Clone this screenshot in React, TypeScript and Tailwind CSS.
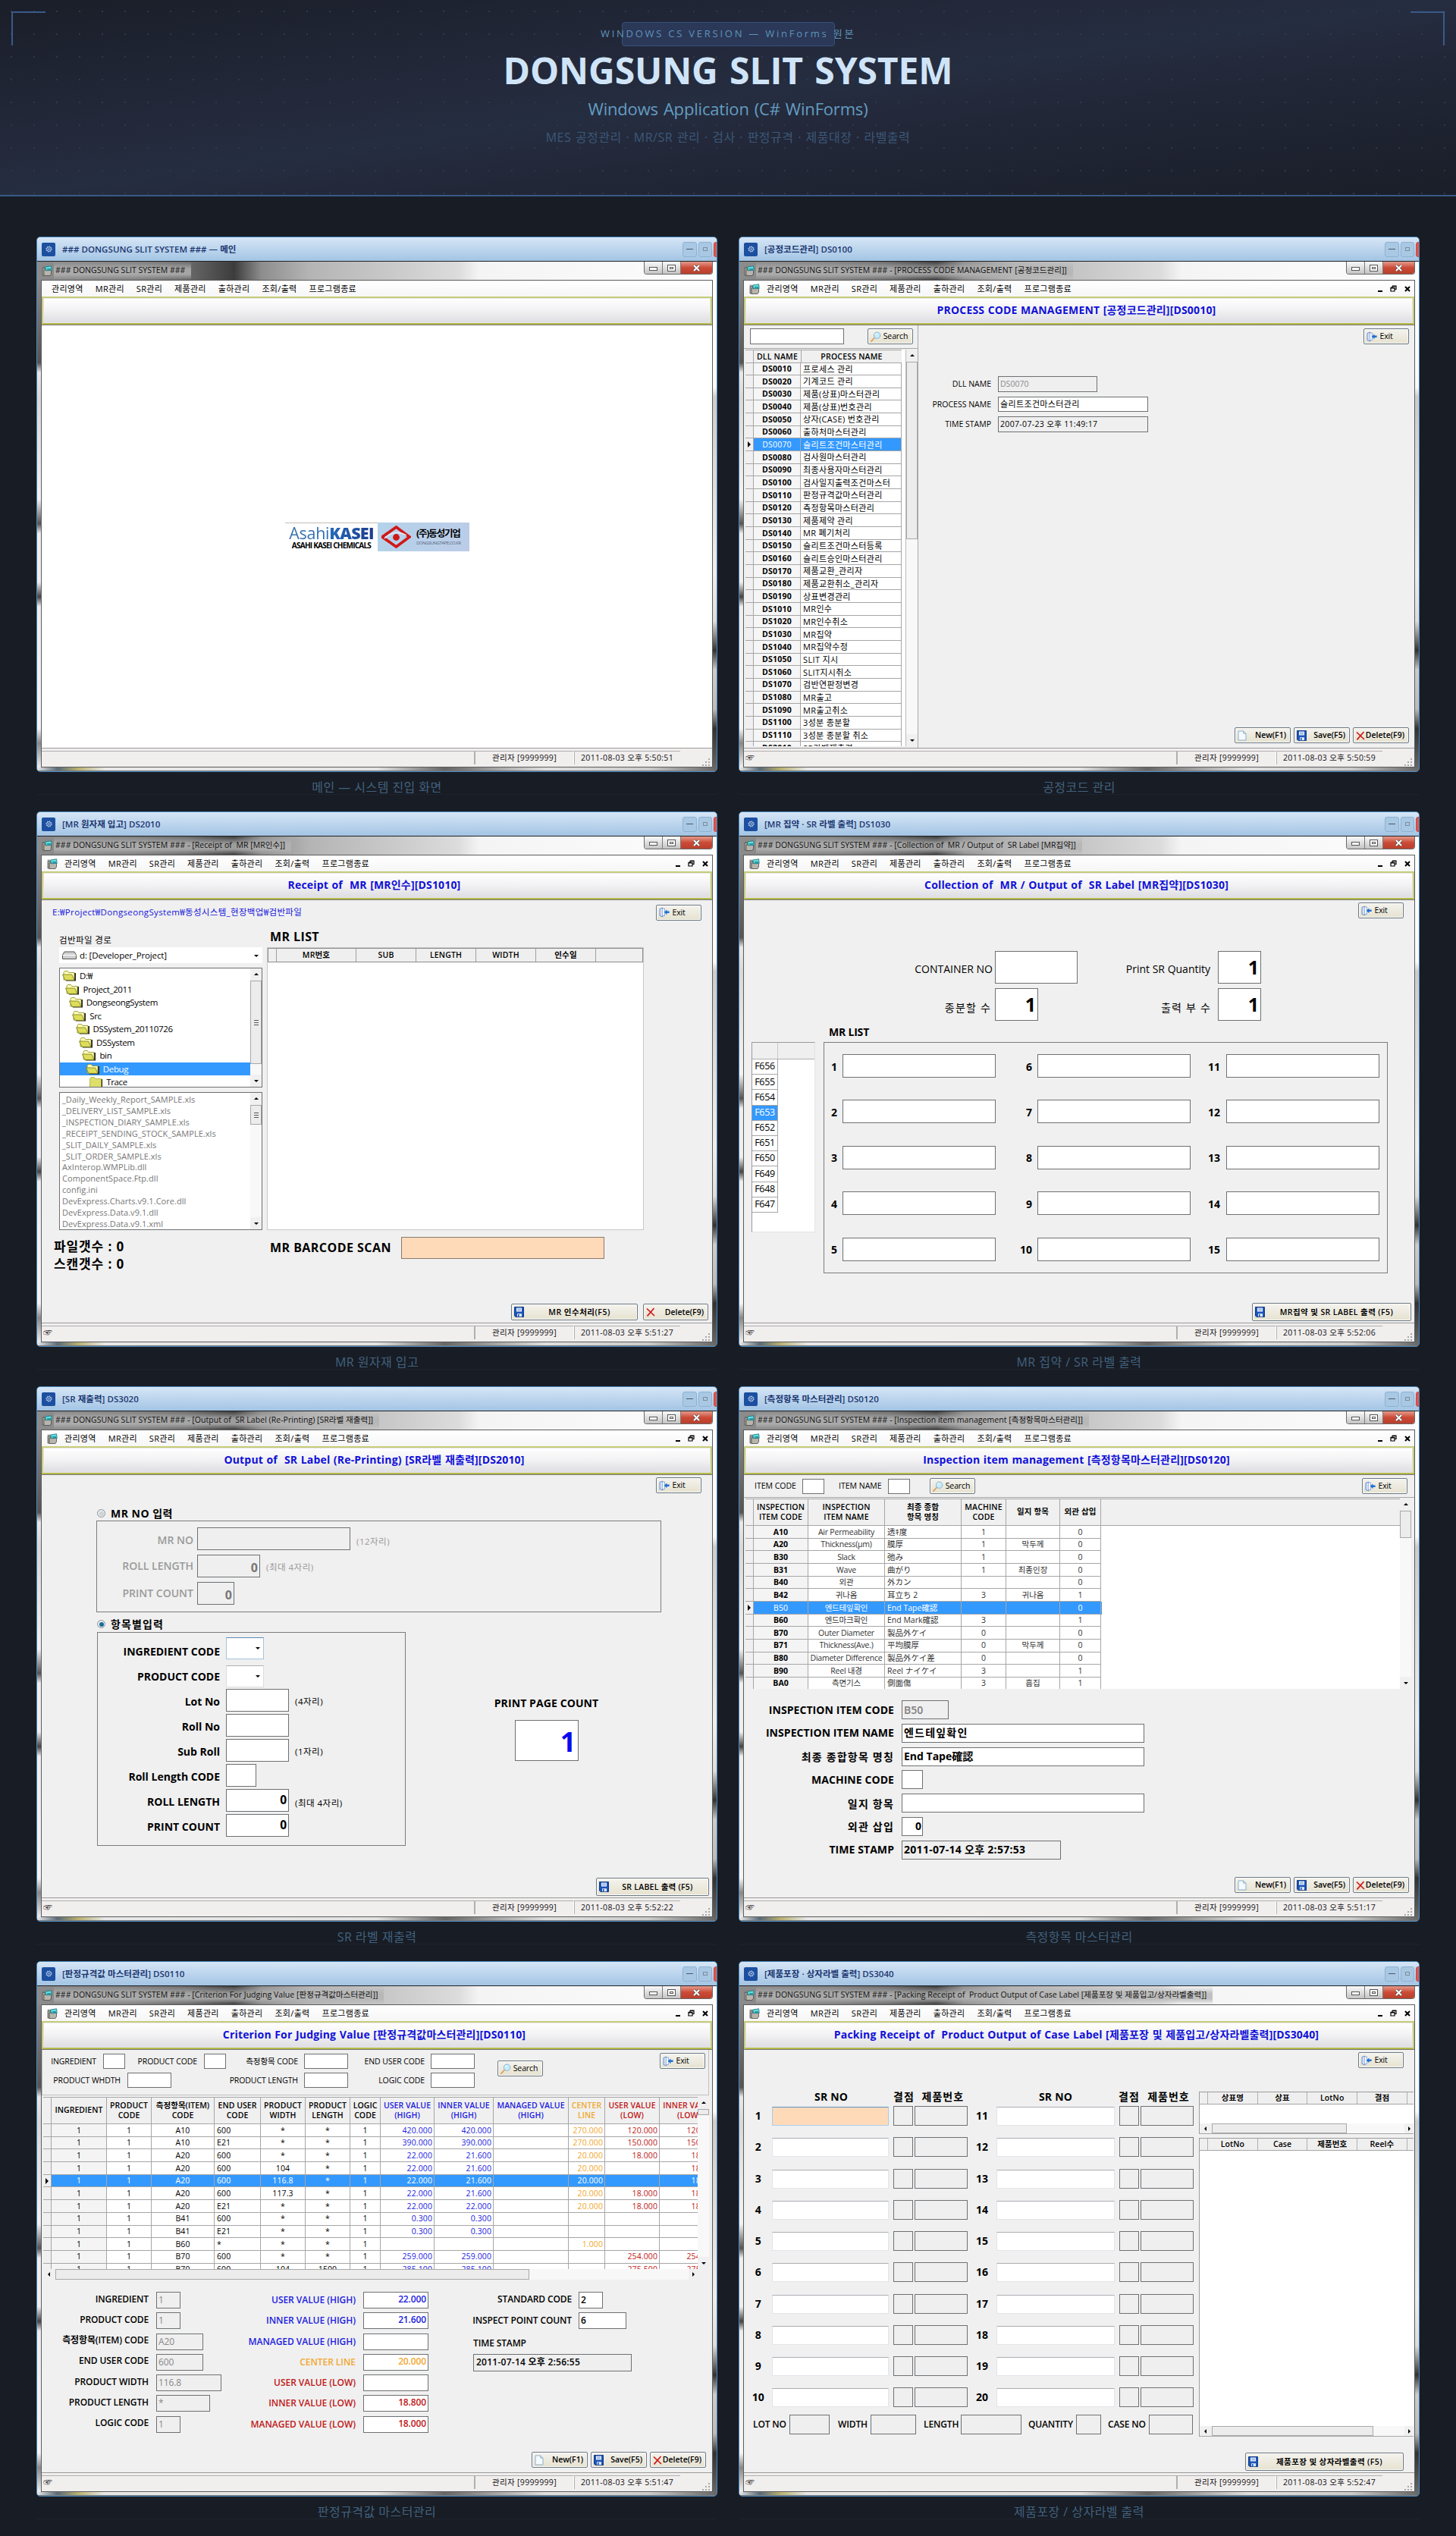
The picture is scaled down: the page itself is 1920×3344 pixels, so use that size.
import React from 'react';
import clsx from 'clsx';

type Kids = { children?: React.ReactNode; className?: string };

const SUNKEN = 'border border-[#6e7073] bg-white';

/* ---------- icons ---------- */

const AppIcon = ({ className }: { className?: string }) => (
  <svg viewBox="0 0 14 14" className={clsx('h-[14px] w-[14px] shrink-0', className)}>
    <path d="M1 3.5h4V13H1z" fill="#a4a29c" stroke="#555" strokeWidth=".8" />
    <path d="M3 6h9.5v5L11 13.5H3z" fill="#b9b5ac" stroke="#4a4a4a" strokeWidth=".8" />
    <path d="M4.5 2 12.6.8l.6 5.6-7.6.4z" fill="#5fe0dc" stroke="#1c6c78" strokeWidth=".8" />
    <path d="M7 4h5l.4 2.2-5 .2z" fill="#2a9aa6" />
    <path d="M.6 2.2h3.2" stroke="#777" />
  </svg>
);

const SearchIcon = () => (
  <svg viewBox="0 0 14 14" className="h-[14px] w-[14px] shrink-0">
    <path d="M1 13 5 8.6" stroke="#e0a868" strokeWidth="2" strokeLinecap="round" />
    <circle cx="8.6" cy="5.2" r="4.2" fill="#c9ecfb" stroke="#7fb4d8" />
    <path d="M6.4 4.4a2.6 2.6 0 0 1 2.4-1.8" stroke="#fff" fill="none" />
  </svg>
);

const ExitIcon = () => (
  <svg viewBox="0 0 14 14" className="h-[14px] w-[14px] shrink-0">
    <path d="M1 2.4 4.8 1v12L1 11.4z" fill="#cfe0f8" stroke="#5b86cc" strokeWidth=".9" />
    <path d="M4.8 2h2.6v9.6H4.8" fill="#fff" stroke="#7d9fd6" strokeWidth=".9" />
    <path d="M6.8 6.8 10.4 3.4v2.1H13.6v2.6h-3.2v2.1z" fill="#1d6fd0" />
  </svg>
);

const DiskIcon = () => (
  <svg viewBox="0 0 13 14" className="h-[14px] w-[13px] shrink-0">
    <path d="M.5.5h12v13H2L.5 12z" fill="#1c55b8" stroke="#123a86" />
    <path d="M3 1.5h7v5H3z" fill="#f2f7ff" />
    <path d="M4 3h5M4 4.8h5" stroke="#5b86cc" strokeWidth=".8" />
    <path d="M4 9.2h6v4H4z" fill="#dfe9f8" />
    <path d="M5 10h1.6v3.2H5z" fill="#1c55b8" />
  </svg>
);

const PageIcon = () => (
  <svg viewBox="0 0 12 14" className="h-[14px] w-[12px] shrink-0">
    <path d="M1 1h6.8L11 4.2V13H1z" fill="#f4faff" stroke="#8ab0cc" />
    <path d="M7.8 1v3.2H11" fill="#cfe4f2" stroke="#8ab0cc" />
  </svg>
);

const CrossIcon = () => (
  <svg viewBox="0 0 12 12" className="h-[12px] w-[12px] shrink-0">
    <path d="M1 1.5 11 11M10.5 1 1.5 11.4" stroke="#d01818" strokeWidth="1.7" />
  </svg>
);

const FolderIcon = ({ open = true }: { open?: boolean }) => (
  <svg viewBox="0 0 19 15" className="h-[15px] w-[19px] shrink-0">
    {open ? (
      <>
        <path d="M4 4h14v10.5H5z" fill="#222" />
        <path d="M2 3.5 3.2 1.5h4.2l1.4 2H16v9.5H2z" fill="#ffffb8" stroke="#8a8a20" strokeWidth=".8" />
        <path d="M.5 6h12.2l3.2 7.4H4z" fill="#dede5a" stroke="#77771c" strokeWidth=".8" />
      </>
    ) : (
      <>
        <path d="M3 4h15v11H3z" fill="#222" />
        <path d="M1.5 3.5 3 1.5h4.4l1.4 2H16.5V15h-15z" fill="#dede6a" stroke="#a8a840" strokeWidth=".8" />
      </>
    )}
  </svg>
);

const Arrow = ({ dir }: { dir: 'up' | 'down' | 'left' | 'right' }) => {
  const d = { up: 'M1 5h6L4 2z', down: 'M1 3h6L4 6z', left: 'M5 1v6L2 4z', right: 'M3 1v6l3-3z' }[dir];
  return (
    <svg viewBox="0 0 8 8" className="h-2 w-2 shrink-0">
      <path d={d} fill="#000" />
    </svg>
  );
};

/* ---------- small controls ---------- */

const Btn = ({ children, className, icon }: Kids & { icon: React.ReactNode }) => (
  <div
    className={clsx(
      'flex shrink-0 items-center rounded-[2px] border border-[#6d7a86] bg-linear-to-b from-[#f4f3ee] to-[#e6e2d0] px-[3px] shadow-[inset_0_0_0_1px_#faf9f4]',
      className,
    )}
  >
    {icon}
    <span className="flex-1 text-center whitespace-nowrap">{children}</span>
  </div>
);

const ExitBtn = ({ className }: { className?: string }) => (
  <Btn icon={<ExitIcon />} className={clsx('h-[21px] w-[60px] pr-[17px] tracking-[-0.2px]', className)}>
    Exit
  </Btn>
);

const SearchBtn = ({ className }: { className?: string }) => (
  <Btn icon={<SearchIcon />} className={clsx('h-[21px] w-[60px] tracking-[-0.1px]', className)}>
    Search
  </Btn>
);

const Field = ({ children, className, ro }: Kids & { ro?: boolean }) => (
  <div
    className={clsx(
      'flex shrink-0 items-center overflow-hidden border border-[#6e7073] px-[2px] whitespace-nowrap',
      ro ? 'bg-[#efefef]' : 'bg-white',
      className,
    )}
  >
    {children}
  </div>
);

const Label = ({ children, className }: Kids) => (
  <div className={clsx('shrink-0 text-right whitespace-nowrap', className)}>{children}</div>
);

const Grip = ({ show }: { show?: boolean }) =>
  show ? <span className="h-[7px] w-[6px] border-y border-[#555] bg-[linear-gradient(to_bottom,transparent_2px,#555_2px,#555_3px,transparent_3px)]" /> : null;

const VScroll = ({ className, thumb, grip }: { className?: string; thumb: string; grip?: boolean }) => (
  <div className={clsx('flex shrink-0 flex-col items-center bg-[#f8f8f8]', className)}>
    <div className="flex h-4 w-full shrink-0 items-center justify-center bg-[#f0f0f0]">
      <Arrow dir="up" />
    </div>
    <div className={clsx('flex w-full shrink-0 items-center justify-center border border-[#a8a8a8] bg-[#ececec]', thumb)}>
      <Grip show={grip} />
    </div>
    <div className="flex-1" />
    <div className="flex h-4 w-full shrink-0 items-center justify-center bg-[#f0f0f0]">
      <Arrow dir="down" />
    </div>
  </div>
);

const HScroll = ({ className, thumb }: { className?: string; thumb: string }) => (
  <div className={clsx('flex shrink-0 items-center bg-[#f8f8f8]', className)}>
    <div className="flex h-full w-4 shrink-0 items-center justify-center bg-[#f0f0f0]">
      <Arrow dir="left" />
    </div>
    <div className={clsx('h-full shrink-0 border border-[#a8a8a8] bg-[#ececec]', thumb)} />
    <div className="flex-1" />
    <div className="flex h-full w-3 shrink-0 items-center justify-center bg-[#f0f0f0]">
      <Arrow dir="right" />
    </div>
  </div>
);

const EditButtons = ({ className }: { className?: string }) => (
  <div className={clsx('flex gap-[4px]', className)}>
    <Btn icon={<PageIcon />} className="h-[21px] w-[74px] pr-[5px] font-semibold [&>span]:text-right">
      New(F1)
    </Btn>
    <Btn icon={<DiskIcon />} className="h-[21px] w-[74px] pr-[5px] font-semibold [&>span]:text-right">
      Save(F5)
    </Btn>
    <Btn icon={<CrossIcon />} className="h-[21px] w-[74px] pr-[5px] font-semibold [&>span]:text-right">
      Delete(F9)
    </Btn>
  </div>
);

/* ---------- window chrome ---------- */

const MENU = ['관리영역', 'MR관리', 'SR관리', '제품관리', '출하관리', '조회/출력', '프로그램종료'];

type WindowProps = {
  bar: string;
  caption?: string;
  heading?: string;
  time: string;
  note: string;
  body?: string;
  children?: React.ReactNode;
};

const Window = ({ bar, caption, heading, time, note, body = 'bg-[#f0f0f0]', children }: WindowProps) => (
  <div className="flex h-[758px] w-[898px] flex-col">
    <div className="flex h-[706px] flex-col overflow-hidden rounded-[5px] border border-[#4a8ac0] bg-[#777]">
      <div className="flex h-[31px] shrink-0 items-center overflow-hidden bg-linear-to-b from-[#d6e6f6] to-[#a3c4e4] pl-[6px]">
        <div className="flex h-[18px] w-[18px] shrink-0 items-center justify-center rounded-[2px] bg-[#1c4fa0]">
          <svg viewBox="0 0 10 10" className="h-[9px] w-[9px]">
            <circle cx="5" cy="5" r="3.2" fill="none" stroke="#dce8fa" strokeWidth="1.1" />
            <circle cx="5" cy="5" r="4.3" fill="none" stroke="#dce8fa" strokeWidth=".9" strokeDasharray="1.2 2.17" />
            <circle cx="5" cy="5" r="1" fill="#dce8fa" />
          </svg>
        </div>
        <span className="ml-[9px] w-[818px] shrink-0 text-[11.5px] font-semibold tracking-[0.05px] whitespace-pre text-[#1a3570]">
          {bar}
        </span>
        <div className="flex shrink-0 gap-[2px]">
          <div className="flex h-5 w-[19px] items-center justify-center rounded-[3px] border border-[#8fb2d2] bg-[#a9c8e4]">
            <span className="h-px w-[9px] bg-[#4a5a6a]" />
          </div>
          <div className="flex h-5 w-[18px] items-center justify-center rounded-[3px] border border-[#8fb2d2] bg-[#a9c8e4]">
            <span className="h-[5px] w-[6px] border border-[#7f8d9a]" />
          </div>
          <div className="h-5 w-5 rounded-[3px] border border-[#c84848] bg-[#d85850]" />
        </div>
      </div>

      <div className="flex h-[25px] shrink-0 items-start border-t border-[#222] bg-[linear-gradient(to_right,#8c8c8c_0%,#808080_14%,#6a6a6a_22%,#3c3c3c_29%,#8d8d8d_33%,#b4b4b4_40%,#c9c9c9_52%,#dcdcdc_62%,#f4f4f4_65%,#fdfdfd_100%)] pl-[6px]">
        <AppIcon className="mt-[5px]" />
        <div className="ml-[2px] flex h-[24px] items-center bg-[linear-gradient(to_bottom,transparent,#b4b4b4cc_40%,#b4b4b4cc_70%,transparent)] pr-2 pl-[2px]">
          <span className="text-[10.5px] tracking-[0.04px] whitespace-pre text-[#111]">
            {'### DONGSUNG SLIT SYSTEM ###' + (caption ? ' - [' + caption + ']' : '')}
          </span>
        </div>
        <div className="mr-[5px] ml-auto flex h-[17px] overflow-hidden rounded-b-[4px] border border-t-0 border-[#6a6a6a]">
          <div className="flex w-[24px] items-end justify-center border-r border-[#7a7a7a] bg-linear-to-b from-[#fafafa] to-[#c4c4c4] pb-[4px]">
            <span className="h-[5px] w-[11px] border border-[#555] bg-white" />
          </div>
          <div className="flex w-[24px] items-center justify-center border-r border-[#7a7a7a] bg-linear-to-b from-[#fafafa] to-[#c4c4c4]">
            <span className="flex h-[9px] w-[11px] items-center justify-center border border-[#555] bg-white">
              <span className="h-[3px] w-[5px] border border-[#555]" />
            </span>
          </div>
          <div className="flex w-[41px] items-center justify-center bg-linear-to-b from-[#e39a8c] via-[#cc4a36] to-[#b8402c]">
            <svg viewBox="0 0 10 9" className="h-[9px] w-[11px]">
              <path d="M1.5 1 8.5 8M8.5 1 1.5 8" stroke="#555" strokeWidth="3.4" />
              <path d="M1.5 1 8.5 8M8.5 1 1.5 8" stroke="#fff" strokeWidth="2" />
            </svg>
          </div>
        </div>
      </div>

      <div className="flex h-[643px] shrink-0">
        <div className="w-[5px] bg-[linear-gradient(to_bottom,#888_0%,#555_17%,#e8e8e8_19%,#d8d8d8_24%,#f2f2f2_45%,#555_50%,#eee_52%,#eee_62%,#444_65%,#eee_67%,#f4f4f4_92%,#888_95%,#eee_100%)]" />
        <div className="flex w-[886px] flex-col border border-[#5c5c5c] bg-[#f0f0f0] text-[10.5px] leading-none text-black">
          <div className={clsx('flex h-[21px] shrink-0 items-center bg-linear-to-b from-white to-[#f6f6f6]', heading ? 'pl-[7px]' : 'pl-[13px]')}>
            {heading && <AppIcon className="mr-[9px]" />}
            <div className="flex gap-[16px] text-[11px] tracking-[0.3px]">
              {MENU.map((m) => (
                <span key={m}>{m}</span>
              ))}
            </div>
            {heading && (
              <div className="mr-[5px] ml-auto flex items-center gap-[10px]">
                <span className="mt-[6px] h-[2px] w-[6px] bg-black" />
                <svg viewBox="0 0 9 9" className="h-[9px] w-[9px]">
                  <path d="M3 1h5v4.5H6M3 1v2M3 1.4h5" fill="none" stroke="#000" strokeWidth="1.2" />
                  <path d="M1 3.4h5V8H1zM1 4h5" fill="none" stroke="#000" strokeWidth="1.2" />
                </svg>
                <svg viewBox="0 0 8 8" className="h-[8px] w-[8px]">
                  <path d="M1 1 7 7M7 1 1 7" stroke="#000" strokeWidth="2" />
                </svg>
              </div>
            )}
          </div>
          <div className="h-[38px] shrink-0 border-b border-[#777]">
            <div className="flex h-[37px] items-center justify-center border-2 border-[#c6cc78] border-b-[#b4ba48] bg-linear-to-b from-white via-[#f2f2f4] to-[#dddde2] shadow-[inset_0_0_0_1px_#e6e6ea]">
              <span className="mr-[7px] pb-px text-[14px] font-bold tracking-[0.17px] [word-spacing:0.7px] whitespace-pre text-[#1010d8]">{heading}</span>
            </div>
          </div>
          <div className={clsx('flex h-[557px] shrink-0 flex-col overflow-hidden', body)}>{children}</div>
          <div className="flex h-[25px] shrink-0 items-center border-t border-[#9a9a9a] bg-[#f1eeee] text-[#111]">
            <div className="flex h-[18px] w-[571px] items-center border-t border-r border-[#b0b0b0] pl-[2px] text-[12px]">
              {heading && '☞'}
            </div>
            <div className="flex h-[18px] w-[131px] items-center justify-center border-t border-r border-l border-[#b0b0b0] border-r-white tracking-[0.33px]">
              관리자 [9999999]
            </div>
            <div className="flex h-[18px] w-[140px] items-center border-t border-l border-[#b0b0b0] pl-2 tracking-[0.33px]">
              2011-08-03 오후 {time}
            </div>
            <svg viewBox="0 0 10 10" className="mt-3 mr-[3px] ml-auto h-[10px] w-[10px]">
              <path d="M8 0h2v2H8zM8 4h2v2H8zM8 8h2v2H8zM4 4h2v2H4zM4 8h2v2H4zM0 8h2v2H0z" fill="#a8a8a8" />
            </svg>
          </div>
        </div>
        <div className="w-[5px] bg-[linear-gradient(to_bottom,#fff_0%,#fafafa_22%,#ccc_24%,#eee_60%,#ddd_70%,#333_76%,#ccc_80%,#bbb_88%,#333_92%,#666_100%)]" />
      </div>
      <div className="h-[4px] shrink-0 bg-[linear-gradient(to_right,#e8e8e8_0%,#5a6a78_3%,#b8b070_6%,#e8e8e8_10%,#e4e4e4_50%,#666_60%,#aaa_68%,#e0e0e0_75%,#ccc_90%,#666_100%)]" />
    </div>
    <div className="flex h-[30px] items-center justify-center border-b border-[#1d232e] pt-[13px] pb-[3px] text-[16px] tracking-[0.45px] text-[#41627f]">
      {note}
    </div>
  </div>
);

/* ---------- 메인 ---------- */

const MainScreen = () => (
  <Window bar="### DONGSUNG SLIT SYSTEM ### — 메인" time="5:50:51" note="메인 — 시스템 진입 화면" body="bg-white">
    <div className="mt-[260px] ml-[321px] flex h-[38px] w-[243px]">
      <div className="flex w-[122px] flex-col items-center border-t border-[#c4bcb4] pt-[1px]">
        <div className="bg-linear-to-r from-[#3a72a8] via-[#2468b8] to-[#1c3c8c] bg-clip-text text-[21.5px] leading-[23px] tracking-[-0.3px] whitespace-nowrap text-transparent">
          Asahi<b className="font-extrabold tracking-[-0.7px]">KASEI</b>
        </div>
        <div className="text-[10px] leading-[11px] font-bold tracking-[-0.76px] whitespace-nowrap">ASAHI KASEI CHEMICALS</div>
      </div>
      <div className="flex w-[121px] items-center bg-linear-to-r from-[#b4d2ea] to-[#bccce8] pl-[5px]">
        <svg viewBox="0 0 39 30" className="h-[30px] w-[39px]">
          <path d="M1 15 19.5 2 37 15 19.5 28z" fill="none" stroke="#d01818" strokeWidth="3.6" />
          <path d="M4 17q14-13 29-4" fill="none" stroke="#e8eef8" strokeWidth="1.4" />
          <circle cx="19.5" cy="15.5" r="4.4" fill="#d01818" />
        </svg>
        <div className="ml-[7px] flex flex-col gap-[2px]">
          <span className="text-[12.5px] leading-[14px] font-bold tracking-[-1.2px] whitespace-nowrap">(주)동성기업</span>
          <span className="text-[6px] leading-[7px] tracking-[-0.5px] whitespace-nowrap text-[#5a6a80]">DONGSUNGTAPE.CO.KR</span>
        </div>
      </div>
    </div>
  </Window>
);

/* ---------- 공정코드 ---------- */

const PROCESSES = [
  ['DS0010', '프로세스 관리'],
  ['DS0020', '기계코드 관리'],
  ['DS0030', '제품(상표)마스터관리'],
  ['DS0040', '제품(상표)번호관리'],
  ['DS0050', '상자(CASE) 번호관리'],
  ['DS0060', '출하처마스터관리'],
  ['DS0070', '슬리트조건마스터관리'],
  ['DS0080', '검사원마스터관리'],
  ['DS0090', '최종사용자마스터관리'],
  ['DS0100', '검사일지출력조건마스터'],
  ['DS0110', '판정규격값마스터관리'],
  ['DS0120', '측정항목마스터관리'],
  ['DS0130', '제품제약 관리'],
  ['DS0140', 'MR 폐기처리'],
  ['DS0150', '슬리트조건마스터등록'],
  ['DS0160', '슬리트승인마스터관리'],
  ['DS0170', '제품교환_관리자'],
  ['DS0180', '제품교환취소_관리자'],
  ['DS0190', '상표변경관리'],
  ['DS1010', 'MR인수'],
  ['DS1020', 'MR인수취소'],
  ['DS1030', 'MR집약'],
  ['DS1040', 'MR집약수정'],
  ['DS1050', 'SLIT 지시'],
  ['DS1060', 'SLIT지시취소'],
  ['DS1070', '검반연판정변경'],
  ['DS1080', 'MR출고'],
  ['DS1090', 'MR출고취소'],
  ['DS1100', '3성분 종분할'],
  ['DS1110', '3성분 종분할 취소'],
  ['DS2010', 'SR라벨재출력'],
];

const RowMark = ({ on }: { on?: boolean }) => (
  <div className="flex w-[11px] shrink-0 items-center justify-center border-r border-b border-[#a6a6a6] bg-[#f0f0f0]">
    {on && (
      <svg viewBox="0 0 6 8" className="h-2 w-[6px]">
        <path d="M1 0v8l4-4z" fill="#000" />
      </svg>
    )}
  </div>
);

const ProcessScreen = () => (
  <Window
    bar="[공정코드관리] DS0100"
    caption="PROCESS CODE MANAGEMENT [공정코드관리]"
    heading="PROCESS CODE MANAGEMENT [공정코드관리][DS0010]"
    time="5:50:59"
    note="공정코드 관리"
  >
    <div className="flex h-full">
      <div className="flex w-[230px] shrink-0 flex-col border-r border-[#a8a8a8]">
        <div className="flex h-[31px] shrink-0 items-start border-b border-[#a8a8a8] pt-1 pl-2">
          <Field className="h-[21px] w-[124px]" />
          <SearchBtn className="ml-[31px]" />
        </div>
        <div className="mt-[1px] ml-[2px] flex h-[523px] bg-white">
          <div className="w-[206px] overflow-hidden">
            <div className="flex h-[17.5px] items-center border-t border-b border-[#a6a6a6] bg-[#f0f0f0] font-semibold">
              <div className="w-[11px] self-stretch border-r border-[#a6a6a6]" />
              <div className="w-[62px] text-center tracking-[0.2px]">DLL NAME</div>
              <div className="flex w-[133px] items-center justify-center self-stretch border-l border-[#a6a6a6] tracking-[0.2px]">PROCESS NAME</div>
            </div>
            {PROCESSES.map(([code, name]) => {
              const on = code === 'DS0070';
              return (
                <div key={code} className="flex h-[16.67px]">
                  <RowMark on={on} />
                  <div
                    className={clsx(
                      'flex w-[62px] items-center justify-center border-r border-b border-[#a6a6a6] tracking-[0.2px]',
                      on ? 'bg-[#3399ff] text-white' : 'bg-[#f6f6f6] font-bold',
                    )}
                  >
                    {code}
                  </div>
                  <div
                    className={clsx(
                      'flex w-[133px] items-center border-r border-b border-[#a6a6a6] pl-[3px] text-[11px] tracking-[0.35px] whitespace-nowrap',
                      on && 'bg-[#3399ff] text-white',
                    )}
                  >
                    {name}
                  </div>
                </div>
              );
            })}
          </div>
          <div className="w-[6px] border-r border-[#bbb]" />
          <VScroll className="w-[15px]" thumb="h-[234px]" />
        </div>
      </div>
      <div className="flex flex-1 flex-col">
        <ExitBtn className="mt-1 mr-[7px] self-end" />
        <div className="mt-[42px] flex flex-col gap-[6px]">
          <div className="flex items-center gap-[9px]">
            <Label className="w-[96px]">DLL NAME</Label>
            <Field ro className="h-[20.5px] w-[131px] text-[#8a8a8a]">DS0070</Field>
          </div>
          <div className="flex items-center gap-[9px]">
            <Label className="w-[96px]">PROCESS NAME</Label>
            <Field className="h-[20.5px] w-[198px] text-[11px] tracking-[0.35px]">슬리트조건마스터관리</Field>
          </div>
          <div className="flex items-center gap-[9px]">
            <Label className="w-[96px]">TIME STAMP</Label>
            <Field ro className="h-[20.5px] w-[198px] tracking-[0.33px]">2007-07-23 오후 11:49:17</Field>
          </div>
        </div>
        <EditButtons className="mt-auto mr-[7px] mb-[6px] self-end" />
      </div>
    </div>
  </Window>
);

/* ---------- MR 입고 ---------- */

const FOLDERS = ['D:₩', 'Project_2011', 'DongseongSystem', 'Src', 'DSSystem_20110726', 'DSSystem', 'bin', 'Debug', 'Trace'];

const FILES = [
  '_Daily_Weekly_Report_SAMPLE.xls',
  '_DELIVERY_LIST_SAMPLE.xls',
  '_INSPECTION_DIARY_SAMPLE.xls',
  '_RECEIPT_SENDING_STOCK_SAMPLE.xls',
  '_SLIT_DAILY_SAMPLE.xls',
  '_SLIT_ORDER_SAMPLE.xls',
  'AxInterop.WMPLib.dll',
  'ComponentSpace.Ftp.dll',
  'config.ini',
  'DevExpress.Charts.v9.1.Core.dll',
  'DevExpress.Data.v9.1.dll',
  'DevExpress.Data.v9.1.xml',
];

const ReceiptScreen = () => (
  <Window
    bar="[MR 원자재 입고] DS2010"
    caption="Receipt of  MR [MR인수]"
    heading="Receipt of  MR [MR인수][DS1010]"
    time="5:51:27"
    note="MR 원자재 입고"
  >
    <div className="mt-[5px] flex h-[22px] items-center justify-between pr-[14px] pl-[14px]">
      <span className="text-[11.5px] tracking-[0.35px] text-[#1414dc]">E:₩Project₩DongseongSystem₩동성시스템_현장백업₩검반파일</span>
      <ExitBtn />
    </div>
    <div className="mt-[7px] flex h-[27px] items-center pl-[23px]">
      <span className="mt-[10px] w-[278px] text-[11.5px] tracking-[0.4px]">검반파일 경로</span>
      <span className="text-[16px] font-bold tracking-[0.4px]">MR LIST</span>
    </div>
    <div className="mt-[1px] flex h-[373px] pl-[23px]">
      <div className="w-[268px]">
        <div className="flex h-[21px] items-center bg-white pl-1 text-[11.5px] tracking-[-0.15px]">
          <svg viewBox="0 0 19 12" className="h-3 w-[19px]">
            <path d="M3 1h13l2.5 4v5.5H.5V5z" fill="#d0d0d0" stroke="#555" />
            <path d="M.5 5.5h18" stroke="#fff" />
          </svg>
          <span className="ml-[4px] flex-1">d: [Developer_Project]</span>
          <span className="mr-1">
            <Arrow dir="down" />
          </span>
        </div>
        <div className={clsx('mt-[6px] flex h-[158px] text-[11.5px] tracking-[-0.35px]', SUNKEN)}>
          <div className="flex-1 overflow-hidden pt-[1px]">
            {FOLDERS.map((f, i) => (
              <div key={f} className={clsx('flex h-[17.5px] items-center', f === 'Debug' && 'bg-[#3399ff] text-white')}>
                <div style={{ width: 3 + i * 4.4 }} className="shrink-0" />
                <FolderIcon open={f !== 'Trace'} />
                <span className="ml-[4px]">{f}</span>
              </div>
            ))}
          </div>
          <VScroll className="w-[15px]" thumb="h-[110px]" grip />
        </div>
        <div className={clsx('mt-[6px] flex h-[182px] text-[11px] text-[#777]', SUNKEN)}>
          <div className="flex-1 overflow-hidden pt-[1px] pl-[3px] tracking-[0.05px]">
            {FILES.map((f) => (
              <div key={f} className="flex h-[14.93px] items-center">
                {f}
              </div>
            ))}
          </div>
          <VScroll className="w-[15px]" thumb="h-[26px]" grip />
        </div>
      </div>
      <div className="ml-[6px] h-[373px] w-[497px] border border-[#c8c8c8] bg-white">
        <div className="flex h-[19px] items-stretch border border-[#8c8c8c] bg-[#efefef] font-semibold tracking-[0.15px]">
          <div className="w-[11px] border-r border-[#a0a0a0]" />
          <div className="flex w-[105px] items-center justify-center border-r border-[#a0a0a0]">MR번호</div>
          {['SUB', 'LENGTH', 'WIDTH', '인수일'].map((h) => (
            <div key={h} className="flex w-[79px] items-center justify-center border-r border-[#a0a0a0]">
              {h}
            </div>
          ))}
        </div>
      </div>
    </div>
    <div className="mt-[7px] flex pl-4">
      <div className="w-[285px] pt-[3px] text-[17px] leading-[23px] font-bold tracking-[0.9px]">
        <div>파일갯수 : 0</div>
        <div>스캔갯수 : 0</div>
      </div>
      <div className="flex h-[32px] items-center">
        <span className="w-[173px] text-[16px] font-bold tracking-[0.45px]">MR BARCODE SCAN</span>
        <div className="h-[29px] w-[268px] border border-[#8a7a6c] bg-[#ffdab9]" />
      </div>
    </div>
    <div className="mt-auto mr-[5px] mb-[3px] flex gap-[7px] self-end font-semibold">
      <Btn icon={<DiskIcon />} className="h-[22px] w-[167px] tracking-[0.5px]">
        MR 인수처리(F5)
      </Btn>
      <Btn icon={<CrossIcon />} className="h-[22px] w-[86px] pr-[5px] [&>span]:text-right">
        Delete(F9)
      </Btn>
    </div>
  </Window>
);

/* ---------- MR 집약 ---------- */

const CONTAINERS = ['F656', 'F655', 'F654', 'F653', 'F652', 'F651', 'F650', 'F649', 'F648', 'F647'];

const MrSlot = ({ n, className }: { n: number; className?: string }) => (
  <div className="flex h-[60.4px] items-start">
    <span className={clsx('flex h-[33px] items-center justify-end text-[14px] font-bold', className)}>{n}</span>
    <Field className="h-[31px] w-[202px]" />
  </div>
);

const CollectScreen = () => (
  <Window
    bar="[MR 집약 · SR 라벨 출력] DS1030"
    caption="Collection of  MR / Output of  SR Label [MR집약]"
    heading="Collection of  MR / Output of  SR Label [MR집약][DS1030]"
    time="5:52:06"
    note="MR 집약 / SR 라벨 출력"
  >
    <ExitBtn className="mt-[3px] mr-[14px] self-end" />
    <div className="mt-[43px] flex items-center text-[14px]">
      <Label className="mt-[5px] w-[328px]">CONTAINER NO</Label>
      <Field className="ml-[3px] h-[43px] w-[109px]" />
      <Label className="mt-[5px] w-[175px]">Print SR Quantity</Label>
      <Field className="ml-[10px] h-[43px] w-[57px] justify-end text-[25px] font-bold">1</Field>
    </div>
    <div className="mt-[6px] flex items-center text-[14px] tracking-[1.2px]">
      <Label className="mt-[8px] w-[326px]">종분할 수</Label>
      <Field className="ml-[5px] h-[43px] w-[57px] justify-end text-[25px] font-bold tracking-normal">1</Field>
      <Label className="mt-[8px] w-[228px]">출력 부 수</Label>
      <Field className="ml-[9px] h-[43px] w-[57px] justify-end text-[25px] font-bold tracking-normal">1</Field>
    </div>
    <div className="mt-[8px] h-[20px] pl-[112px] text-[14px] font-bold tracking-[-0.2px]">MR LIST</div>
    <div className="flex pl-[10px]">
      <div className="h-[251px] w-[84px] border border-[#9a9a9a] border-r-[#e4e4e4] border-b-[#e4e4e4] bg-white">
        <div className="flex h-[22px] border-b border-[#b0b0b0] bg-[#efefef]">
          <div className="w-[34px] border-r border-[#c8c8c8]" />
        </div>
        {CONTAINERS.map((c) => (
          <div
            key={c}
            className={clsx(
              'flex h-[20.2px] w-[34px] items-center justify-center border-r border-b border-[#a6a6a6] text-[12.5px] tracking-[-0.3px]',
              c === 'F653' && 'bg-[#3399ff] text-white',
            )}
          >
            {c}
          </div>
        ))}
      </div>
      <div className="ml-[11px] flex h-[305px] w-[744px] border border-[#7c7c7c] pt-[15px]">
        <div>
          {[1, 2, 3, 4, 5].map((n) => (
            <MrSlot key={n} n={n} className="mr-[7px] w-[17px]" />
          ))}
        </div>
        <div className="ml-[20px]">
          {[6, 7, 8, 9, 10].map((n) => (
            <MrSlot key={n} n={n} className="mr-[7px] w-[28px]" />
          ))}
        </div>
        <div className="ml-[12px]">
          {[11, 12, 13, 14, 15].map((n) => (
            <MrSlot key={n} n={n} className="mr-[8px] w-[27px]" />
          ))}
        </div>
      </div>
    </div>
    <Btn icon={<DiskIcon />} className="mt-auto mr-[4px] mb-[2px] h-[24px] w-[210px] self-end font-semibold tracking-[0.4px]">
      MR집약 및 SR LABEL 출력 (F5)
    </Btn>
  </Window>
);

/* ---------- SR 재출력 ---------- */

const Radio = ({ on }: { on?: boolean }) => (
  <span className="flex h-[11px] w-[11px] items-center justify-center rounded-full border border-[#8c9298] bg-[#e8ecee]">
    <span className={clsx('h-[6px] w-[6px] rounded-full', on ? 'bg-[#1c6c98]' : 'bg-[#cfd3d6]')} />
  </span>
);

const Combo = ({ className }: { className?: string }) => (
  <div className={clsx('flex h-[29px] w-[50px] shrink-0 items-center justify-end border bg-white pr-[3px]', className)}>
    <Arrow dir="down" />
  </div>
);

const ReprintRow = ({ label, children }: { label: string; children: React.ReactNode }) => (
  <div className="flex h-[33px] items-center">
    <Label className="mt-[5px] w-[161px] text-[14px] font-bold">{label}</Label>
    <div className="ml-[8px] flex items-center text-[11.5px] tracking-[0.5px]">{children}</div>
  </div>
);

const ReprintScreen = () => (
  <Window
    bar="[SR 재출력] DS3020"
    caption="Output of  SR Label (Re-Printing) [SR라벨 재출력]"
    heading="Output of  SR Label (Re-Printing) [SR라벨 재출력][DS2010]"
    time="5:52:22"
    note="SR 라벨 재출력"
  >
    <ExitBtn className="mt-[3px] mr-[14px] self-end" />
    <div className="mt-[17px] flex h-[19px] items-center gap-[7px] pl-[73px] text-[14px] font-bold tracking-[0.5px]">
      <Radio />
      MR NO 입력
    </div>
    <div className="ml-[72px] flex h-[121px] w-[745px] flex-col gap-[6px] border border-[#7c7c7c] pt-[8px] text-[14px] text-[#9a9a9a]">
      <div className="flex items-center">
        <Label className="mt-[4px] w-[127px] font-semibold">MR NO</Label>
        <Field ro className="ml-[5px] h-[30px] w-[202px]" />
        <span className="mt-[7px] ml-[8px] text-[11.5px] tracking-[0.5px]">(12자리)</span>
      </div>
      <div className="flex items-center">
        <Label className="w-[127px] font-semibold">ROLL LENGTH</Label>
        <Field ro className="ml-[5px] h-[30px] w-[83px] justify-end pt-1 text-[16px] font-bold text-[#777]">0</Field>
        <span className="mt-1 ml-[8px] text-[11.5px] tracking-[0.5px]">(최대 4자리)</span>
      </div>
      <div className="flex items-center">
        <Label className="w-[127px] font-semibold">PRINT COUNT</Label>
        <Field ro className="ml-[5px] h-[30px] w-[49px] justify-end pt-1 text-[16px] font-bold text-[#777]">0</Field>
      </div>
    </div>
    <div className="mt-[5px] flex h-[21px] items-center gap-[7px] pl-[73px] text-[14px] font-bold tracking-[1.1px]">
      <Radio on />
      항목별입력
    </div>
    <div className="flex pl-[73px]">
      <div className="h-[282px] w-[407px] border border-[#7c7c7c] pt-[6px]">
        <ReprintRow label="INGREDIENT CODE">
          <Combo className="mb-[5px] border-[#a4c4dc] border-t-[#5a8ab4]" />
        </ReprintRow>
        <ReprintRow label="PRODUCT CODE">
          <Combo className="mt-[3px] border-[#dcdcdc] border-t-[#b0b0b0]" />
        </ReprintRow>
        <ReprintRow label="Lot No">
          <Field className="h-[30px] w-[83px]" />
          <span className="mt-[4px] ml-[8px]">(4자리)</span>
        </ReprintRow>
        <ReprintRow label="Roll No">
          <Field className="h-[30px] w-[83px]" />
        </ReprintRow>
        <ReprintRow label="Sub Roll">
          <Field className="h-[30px] w-[83px]" />
          <span className="mt-[4px] ml-[8px]">(1자리)</span>
        </ReprintRow>
        <ReprintRow label="Roll Length CODE">
          <Field className="h-[30px] w-[40px]" />
        </ReprintRow>
        <ReprintRow label="ROLL LENGTH">
          <Field className="h-[30px] w-[83px] justify-end text-[15.5px] font-bold tracking-normal">0</Field>
          <span className="mt-[8px] ml-[8px]">(최대 4자리)</span>
        </ReprintRow>
        <ReprintRow label="PRINT COUNT">
          <Field className="h-[30px] w-[83px] justify-end text-[15.5px] font-bold tracking-normal">0</Field>
        </ReprintRow>
      </div>
      <div className="mt-[87px] ml-[110px] flex w-[151px] flex-col items-center text-[14px] font-bold tracking-[0.1px] whitespace-nowrap">
        PRINT PAGE COUNT
        <Field className="mt-[15px] h-[54px] w-[84px] justify-end pt-[4px] text-[36px] text-[#0a0af0]">1</Field>
      </div>
    </div>
    <Btn icon={<DiskIcon />} className="mt-auto mr-[4px] mb-[2px] h-[24px] w-[149px] self-end font-semibold tracking-[0.25px]">
      SR LABEL 출력 (F5)
    </Btn>
  </Window>
);

/* ---------- 측정항목 ---------- */

const ITEM_COLS = [
  { head: ['INSPECTION', 'ITEM CODE'], cls: 'w-[72px] justify-center' },
  { head: ['INSPECTION', 'ITEM NAME'], cls: 'w-[101px] justify-center' },
  { head: ['최종 종합', '항목 명칭'], cls: 'w-[101px] pl-[3px]' },
  { head: ['MACHINE', 'CODE'], cls: 'w-[59px] justify-center' },
  { head: ['일지 항목'], cls: 'w-[71px] justify-center' },
  { head: ['외관 삽입'], cls: 'w-[54px] justify-center' },
];

const ITEMS = [
  ['A10', 'Air Permeability', '透ｷ度', '1', '', '0'],
  ['A20', 'Thickness(μm)', '膜厚', '1', '막두께', '0'],
  ['B30', 'Slack', '弛み', '1', '', '0'],
  ['B31', 'Wave', '曲がり', '1', '최종인장', '0'],
  ['B40', '외관', '外カン', '', '', '0'],
  ['B42', '귀나옴', '耳立ち 2', '3', '귀나옴', '1'],
  ['B50', '엔드테잎확인', 'End Tape確認', '', '', '0'],
  ['B60', '엔드마크확인', 'End Mark確認', '3', '', '1'],
  ['B70', 'Outer Diameter', '製品外ケイ', '0', '', '0'],
  ['B71', 'Thickness(Ave.)', '平均膜厚', '0', '막두께', '0'],
  ['B80', 'Diameter Difference', '製品外ケイ差', '0', '', '0'],
  ['B90', 'Reel 내경', 'Reel ナイケイ', '3', '', '1'],
  ['BA0', '측면기스', '側面傷', '3', '흠집', '1'],
];

const ItemRow = ({ label, wide, children }: { label: string; wide?: boolean; children: React.ReactNode }) => (
  <div className="flex h-[30.8px] items-start text-[14px] font-bold">
    <Label className={clsx('flex h-[25px] w-[198px] items-center justify-end', wide ? 'pt-[2px] tracking-[1.2px]' : 'tracking-[0.07px]')}>
      {label}
    </Label>
    <div className="ml-[10px]">{children}</div>
  </div>
);

const InspectionScreen = () => (
  <Window
    bar="[측정항목 마스터관리] DS0120"
    caption="Inspection item management [측정항목마스터관리]"
    heading="Inspection item management [측정항목마스터관리][DS0120]"
    time="5:51:17"
    note="측정항목 마스터관리"
  >
    <div className="flex h-[30px] shrink-0 items-center border-b border-[#a8a8a8] pl-[14px]">
      <span className="w-[63px]">ITEM CODE</span>
      <Field className="h-[20px] w-[29px]" />
      <span className="ml-[19px] w-[65px]">ITEM NAME</span>
      <Field className="h-[20px] w-[29px]" />
      <SearchBtn className="ml-[26px]" />
      <ExitBtn className="mr-[9px] ml-auto" />
    </div>
    <div className="mt-[1px] ml-[2px] flex h-[251px] w-[878px] shrink-0 bg-white">
      <div className="flex-1 overflow-hidden">
        <div className="flex h-[36px] border-t border-b border-[#a6a6a6] bg-[#f0f0f0] leading-[13.3px] font-semibold">
          <div className="w-[11px] border-r border-[#a6a6a6]" />
          {ITEM_COLS.map((c) => (
            <div
              key={c.head.join()}
              className={clsx('flex shrink-0 flex-col items-center justify-center border-r border-[#a6a6a6] !pl-0 tracking-[0.13px]', c.cls)}
            >
              {c.head.map((h) => (
                <span key={h}>{h}</span>
              ))}
            </div>
          ))}
        </div>
        {ITEMS.map((row) => {
          const on = row[0] === 'B50';
          return (
            <div key={row[0]} className={clsx('flex h-[16.67px] w-[470px]', on && 'bg-[#3399ff] text-white')}>
              <RowMark on={on} />
              {row.map((v, i) => (
                <div
                  key={i}
                  className={clsx(
                    'flex shrink-0 items-center border-r border-b border-[#a6a6a6] whitespace-nowrap',
                    ITEM_COLS[i].cls,
                    i === 0 && !on && 'bg-[#f4f4f4] font-bold',
                    i === 1 && 'tracking-[-0.22px]',
                    i > 0 && !on && 'text-[#333]',
                    i === 2 && "font-['Open_Sans','Noto_Sans_CJK_JP',sans-serif]",
                  )}
                >
                  {v}
                </div>
              ))}
            </div>
          );
        })}
      </div>
      <VScroll className="w-[15px]" thumb="h-[36px]" />
    </div>
    <div className="mt-[15px]">
      <ItemRow label="INSPECTION ITEM CODE">
        <Field ro className="h-[25px] w-[62px] font-semibold text-[#808080]">B50</Field>
      </ItemRow>
      <ItemRow label="INSPECTION ITEM NAME">
        <Field className="h-[25px] w-[320px] tracking-[1.2px]">엔드테잎확인</Field>
      </ItemRow>
      <ItemRow label="최종 종합항목 명칭" wide>
        <Field className="h-[25px] w-[320px]">End Tape確認</Field>
      </ItemRow>
      <ItemRow label="MACHINE CODE">
        <Field className="h-[25px] w-[28px]" />
      </ItemRow>
      <ItemRow label="일지 항목" wide>
        <Field className="h-[25px] w-[320px]" />
      </ItemRow>
      <ItemRow label="외관 삽입" wide>
        <Field className="h-[25px] w-[28px] justify-end pr-px">0</Field>
      </ItemRow>
      <ItemRow label="TIME STAMP">
        <Field ro className="h-[25px] w-[210px] px-1 tracking-[0.3px]">2011-07-14 오후 2:57:53</Field>
      </ItemRow>
    </div>
    <EditButtons className="mt-auto mr-[7px] mb-[6px] self-end" />
  </Window>
);

/* ---------- 판정규격값 ---------- */

const BLUE = 'text-[#1c1ce0]';
const AMBER = 'text-[#f0a830]';
const RED = 'text-[#c01818]';

const JUDGE_COLS = [
  { head: ['INGREDIENT'], cls: 'w-[73px] justify-center', tone: '' },
  { head: ['PRODUCT', 'CODE'], cls: 'w-[59px] justify-center', tone: '' },
  { head: ['측정항목(ITEM)', 'CODE'], cls: 'w-[83px] justify-center', tone: '' },
  { head: ['END USER', 'CODE'], cls: 'w-[61px] pl-[3px]', tone: '' },
  { head: ['PRODUCT', 'WIDTH'], cls: 'w-[59px] justify-center', tone: '' },
  { head: ['PRODUCT', 'LENGTH'], cls: 'w-[59px] justify-center', tone: '' },
  { head: ['LOGIC', 'CODE'], cls: 'w-[40px] justify-center', tone: '' },
  { head: ['USER VALUE', '(HIGH)'], cls: 'w-[71px] justify-end pr-[2px]', tone: BLUE },
  { head: ['INNER VALUE', '(HIGH)'], cls: 'w-[78px] justify-end pr-[2px]', tone: BLUE },
  { head: ['MANAGED VALUE', '(HIGH)'], cls: 'w-[99px] justify-end pr-[2px]', tone: BLUE },
  { head: ['CENTER', 'LINE'], cls: 'w-[48px] justify-end pr-[2px]', tone: AMBER },
  { head: ['USER VALUE', '(LOW)'], cls: 'w-[72px] justify-end pr-[2px]', tone: RED },
  { head: ['INNER VALUE', '(LOW)'], cls: 'w-[78px] justify-end pr-[2px]', tone: RED },
];

const JUDGES = [
  ['1', '1', 'A10', '600', '*', '*', '1', '420.000', '420.000', '', '270.000', '120.000', '120.000'],
  ['1', '1', 'A10', 'E21', '*', '*', '1', '390.000', '390.000', '', '270.000', '150.000', '150.000'],
  ['1', '1', 'A20', '600', '*', '*', '1', '22.000', '21.600', '', '20.000', '18.000', '18.800'],
  ['1', '1', 'A20', '600', '104', '*', '1', '22.000', '21.600', '', '20.000', '', '18.800'],
  ['1', '1', 'A20', '600', '116.8', '*', '1', '22.000', '21.600', '', '20.000', '', '18.800'],
  ['1', '1', 'A20', '600', '117.3', '*', '1', '22.000', '21.600', '', '20.000', '18.000', '18.800'],
  ['1', '1', 'A20', 'E21', '*', '*', '1', '22.000', '22.000', '', '20.000', '18.000', '18.000'],
  ['1', '1', 'B41', '600', '*', '*', '1', '0.300', '0.300', '', '', '', ''],
  ['1', '1', 'B41', 'E21', '*', '*', '1', '0.300', '0.300', '', '', '', ''],
  ['1', '1', 'B60', '*', '*', '*', '1', '', '', '', '1.000', '', ''],
  ['1', '1', 'B70', '600', '*', '*', '1', '259.000', '259.000', '', '', '254.000', '254.000'],
  ['1', '1', 'B70', '600', '104', '1500', '1', '285.100', '285.100', '', '', '275.500', '275.500'],
];

const KEYS = [
  ['INGREDIENT', '1', 'w-[32px]'],
  ['PRODUCT CODE', '1', 'w-[32px]'],
  ['측정항목(ITEM) CODE', 'A20', 'w-[62px]'],
  ['END USER CODE', '600', 'w-[62px]'],
  ['PRODUCT WIDTH', '116.8', 'w-[86px]'],
  ['PRODUCT LENGTH', '*', 'w-[71px]'],
  ['LOGIC CODE', '1', 'w-[32px]'],
];

const LIMITS = [
  ['USER VALUE (HIGH)', '22.000', BLUE],
  ['INNER VALUE (HIGH)', '21.600', BLUE],
  ['MANAGED VALUE (HIGH)', '', BLUE],
  ['CENTER LINE', '20.000', AMBER],
  ['USER VALUE (LOW)', '', RED],
  ['INNER VALUE (LOW)', '18.800', RED],
  ['MANAGED VALUE (LOW)', '18.000', RED],
];

const CriterionScreen = () => (
  <Window
    bar="[판정규격값 마스터관리] DS0110"
    caption="Criterion For Judging Value [판정규격값마스터관리]"
    heading="Criterion For Judging Value [판정규격값마스터관리][DS0110]"
    time="5:51:47"
    note="판정규격값 마스터관리"
  >
    <div className="flex h-[60px] w-[880px] shrink-0 items-start border border-t-0 border-[#c0c0c0]">
      <div className="flex flex-col gap-[5px] pt-[5px] tracking-[-0.1px]">
        <div className="flex items-center">
          <Label className="w-[71px]">INGREDIENT</Label>
          <Field className="ml-[9px] h-[20px] w-[29px]" />
          <Label className="w-[95px]">PRODUCT CODE</Label>
          <Field className="ml-[9px] h-[20px] w-[29px]" />
          <Label className="w-[95px]">측정항목 CODE</Label>
          <Field className="ml-[8px] h-[20px] w-[58px]" />
          <Label className="w-[101px]">END USER CODE</Label>
          <Field className="ml-[8px] h-[20px] w-[58px]" />
        </div>
        <div className="flex items-center">
          <Label className="w-[103px]">PRODUCT WHDTH</Label>
          <Field className="ml-[9px] h-[20px] w-[58px]" />
          <Label className="w-[167px]">PRODUCT LENGTH</Label>
          <Field className="ml-[8px] h-[20px] w-[58px]" />
          <Label className="w-[101px]">LOGIC CODE</Label>
          <Field className="ml-[8px] h-[20px] w-[58px]" />
        </div>
      </div>
      <SearchBtn className="mt-[14px] ml-[30px]" />
      <ExitBtn className="mt-[4px] mr-[4px] ml-auto" />
    </div>
    <div className="mt-[2px] ml-[2px] flex h-[227px] w-[878px] shrink-0 bg-white">
      <div className="w-[863px] overflow-hidden">
        <div className="flex h-[36px] border-t border-b border-[#a6a6a6] bg-[#f0f0f0] leading-[13.3px] font-semibold tracking-[0.05px] whitespace-nowrap">
          <div className="w-[11px] shrink-0 border-r border-[#a6a6a6]" />
          {JUDGE_COLS.map((c) => (
            <div
              key={c.head.join()}
              className={clsx('flex shrink-0 flex-col items-center border-r border-[#a6a6a6] !px-0', c.cls, '!justify-center', c.tone)}
            >
              {c.head.map((h) => (
                <span key={h}>{h}</span>
              ))}
            </div>
          ))}
        </div>
        {JUDGES.map((row, r) => {
          const on = r === 4;
          return (
            <div key={r} className={clsx('flex h-[16.7px] w-[900px]', on && 'bg-[#3399ff] text-white')}>
              <RowMark on={on} />
              {row.map((v, i) => (
                <div
                  key={i}
                  className={clsx(
                    'flex shrink-0 items-center border-r border-b border-[#a6a6a6] tracking-[0.1px]',
                    JUDGE_COLS[i].cls,
                    !on && JUDGE_COLS[i].tone,
                    i === 0 && !on && 'bg-[#f4f4f4]',
                  )}
                >
                  {v}
                </div>
              ))}
            </div>
          );
        })}
      </div>
      <VScroll className="w-[15px]" thumb="h-[8px]" />
    </div>
    <HScroll className="ml-[2px] h-[14px] w-[863px]" thumb="w-[625px]" />
    <div className="mt-[16px] flex text-[12px] font-semibold tracking-[-0.12px]">
      <div className="flex w-[237px] flex-col gap-[5.3px]">
        {KEYS.map(([label, value, w]) => (
          <div key={label} className="flex items-center">
            <Label className="mb-[3px] w-[141px]">{label}</Label>
            <Field ro className={clsx('ml-[10px] h-[22px] font-normal text-[#888]', w)}>
              {value}
            </Field>
          </div>
        ))}
      </div>
      <div className="flex w-[273px] flex-col gap-[5.3px]">
        {LIMITS.map(([label, value, tone]) => (
          <div key={label} className={clsx('flex items-center', tone)}>
            <Label className="w-[177px] tracking-[-0.04px]">{label}</Label>
            <Field className="ml-[10px] h-[22px] w-[86px] justify-end pb-[2px]">{value}</Field>
          </div>
        ))}
      </div>
      <div className="flex flex-col items-start gap-[5.3px]">
        <div className="flex items-center">
          <Label className="mb-[2px] w-[189px]">STANDARD CODE</Label>
          <Field className="ml-[9px] h-[22px] w-[32px]">2</Field>
        </div>
        <div className="flex items-center">
          <Label className="w-[189px]">INSPECT POINT COUNT</Label>
          <Field className="ml-[9px] h-[22px] w-[63px]">6</Field>
        </div>
        <span className="mt-[7px] ml-[59px]">TIME STAMP</span>
        <Field ro className="mt-[3px] ml-[59px] h-[23px] w-[209px] px-[3px] tracking-[0.25px]">
          2011-07-14 오후 2:56:55
        </Field>
      </div>
    </div>
    <EditButtons className="mt-auto mr-[8px] mb-[6px] self-end" />
  </Window>
);

/* ---------- 제품포장 ---------- */

const PackColumn = ({ from, className }: { from: number; className: string }) => (
  <div className={clsx('font-bold', className)}>
    <div className="flex h-[24px] items-center text-[14px]">
      <span className="ml-[38px] w-[156px] text-center tracking-[0.2px]">SR NO</span>
      <span className="w-[38px] text-center tracking-[1px]">결점</span>
      <span className="w-[66px] text-center tracking-[1px]">제품번호</span>
    </div>
    {Array.from({ length: 10 }, (_, i) => from + i).map((n) => (
      <div key={n} className="flex h-[41.25px] items-start">
        <span className="flex h-[26px] w-[38px] items-center justify-center text-[14px]">{n}</span>
        <div
          className={clsx(
            'mt-px h-[25px] w-[156px] border',
            n === 1 ? 'border-[#a8ccec] border-t-[#5a90c0] bg-[#ffdab9]' : 'border-[#e2e4ea] border-t-[#abadb3] bg-white',
          )}
        />
        <Field ro className="ml-[6px] h-[26px] w-[26px]" />
        <Field ro className="ml-[2px] h-[26px] w-[70px]" />
      </div>
    ))}
  </div>
);

const PackGrid = ({ heads, className, thumb }: { heads: string[]; className: string; thumb: string }) => (
  <div className={clsx('flex w-[283px] flex-col border-t border-l border-[#9c9c9c] bg-white', className)}>
    <div className="flex h-[16px] shrink-0 overflow-hidden border-b border-[#a6a6a6] bg-[#efefef] font-semibold tracking-[0.1px]">
      <div className="w-[11px] shrink-0 border-r border-[#b0b0b0]" />
      {heads.map((h) => (
        <div key={h} className="flex w-[65.7px] shrink-0 items-center justify-center border-r border-[#b0b0b0]">
          {h}
        </div>
      ))}
    </div>
    <div className="flex-1" />
    <HScroll className="h-[14px] border-b border-[#a8a8a8]" thumb={thumb} />
  </div>
);

const PackingScreen = () => (
  <Window
    bar="[제품포장 · 상자라벨 출력] DS3040"
    caption="Packing Receipt of  Product Output of Case Label [제품포장 및 제품입고/상자라벨출력]"
    heading="Packing Receipt of  Product Output of Case Label [제품포장 및 제품입고/상자라벨출력][DS3040]"
    time="5:52:47"
    note="제품포장 / 상자라벨 출력"
  >
    <ExitBtn className="mt-[3px] mr-[14px] self-end" />
    <div className="mt-[26px] flex">
      <div className="w-[600px]">
        <div className="flex">
          <PackColumn from={1} className="w-[295px]" />
          <PackColumn from={11} className="w-[305px]" />
        </div>
        <div className="mt-[-6px] flex items-center pl-[12px] text-[12px] font-semibold tracking-[-0.14px]">
          <span className="w-[48px]">LOT NO</span>
          <Field ro className="h-[26px] w-[53px]" />
          <span className="ml-[11px] w-[43px]">WIDTH</span>
          <Field ro className="h-[26px] w-[60px]" />
          <span className="ml-[10px] w-[49px]">LENGTH</span>
          <Field ro className="h-[26px] w-[80px]" />
          <span className="ml-[9px] w-[63px]">QUANTITY</span>
          <Field ro className="h-[26px] w-[33px]" />
          <span className="ml-[9px] w-[54px]">CASE NO</span>
          <Field ro className="h-[26px] w-[58px]" />
        </div>
      </div>
      <div className="mt-[5px] flex flex-col gap-[5px]">
        <PackGrid heads={['상표명', '상표', 'LotNo', '결점', '']} className="h-[56px]" thumb="w-[178px]" />
        <PackGrid heads={['LotNo', 'Case', '제품번호', 'Reel수', '']} className="h-[394px]" thumb="w-[213px]" />
      </div>
    </div>
    <Btn icon={<DiskIcon />} className="mt-auto mr-[14px] mb-[2px] h-[24px] w-[209px] self-end font-semibold tracking-[0.4px]">
      제품포장 및 상자라벨출력 (F5)
    </Btn>
  </Window>
);

/* ---------- page ---------- */

const Hero = () => (
  <header className="h-[259px] border-b-2 border-[#3a5a88] bg-[linear-gradient(to_bottom_right,#1a1e28,#222738_30%,#252d40_50%,#222738_65%,#1a1e28)]">
    <div className="flex h-full justify-between bg-[radial-gradient(circle_at_center,#2a3a4c_0.9px,transparent_1.3px)] bg-[size:30px_30px] px-[15px] pt-[15px]">
      <div className="h-[45px] w-[45px] border-t-2 border-l-2 border-[#3a5a88]" />
      <div className="flex flex-col items-center">
        <div className="mt-[14px] flex h-[32px] w-[281px] items-center justify-center rounded-[4px] border border-[#34507c] bg-[#2b3858] text-[13px] tracking-[2.75px] whitespace-nowrap text-[#5f94b8]">
          WINDOWS CS VERSION — WinForms 원본
        </div>
        <h1 className="mt-[7px] text-[48px] leading-[50px] font-bold tracking-[-0.1px] [word-spacing:3px] whitespace-nowrap text-[#d0e4f8]">
          DONGSUNG SLIT SYSTEM
        </h1>
        <p className="mt-[10px] text-[22px] leading-[30px] tracking-[-0.18px] [word-spacing:1.5px] whitespace-nowrap text-[#649cc0]">
          Windows Application (C# WinForms)
        </p>
        <p className="mt-[11px] text-[16px] leading-[24px] tracking-[0.5px] [word-spacing:1px] whitespace-nowrap text-[#3c5878]">
          MES 공정관리 · MR/SR 관리 · 검사 · 판정규격 · 제품대장 · 라벨출력
        </p>
      </div>
      <div className="h-[45px] w-[45px] border-t-2 border-r-2 border-[#3a5a88]" />
    </div>
  </header>
);

export default function App() {
  return (
    <div className="min-h-[3344px] w-[1920px] overflow-hidden bg-[#181c24] font-['Open_Sans','Noto_Sans_CJK_KR',sans-serif]">
      <Hero />
      <main className="mt-[53px] grid h-[3032px] grid-cols-[898px_898px] gap-x-[28px] overflow-hidden px-[48px]">
        <MainScreen />
        <ProcessScreen />
        <ReceiptScreen />
        <CollectScreen />
        <ReprintScreen />
        <InspectionScreen />
        <CriterionScreen />
        <PackingScreen />
      </main>
    </div>
  );
}
